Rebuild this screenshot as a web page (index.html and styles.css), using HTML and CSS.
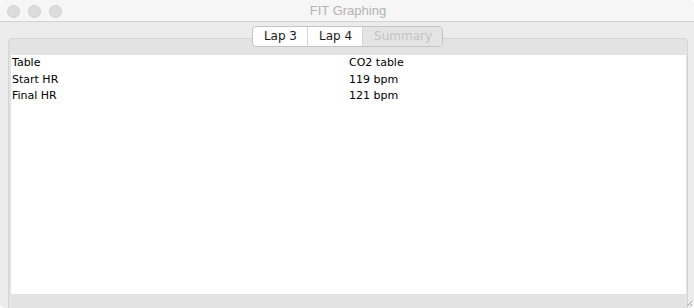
FILE: index.html
```html
<!DOCTYPE html>
<html>
<head>
<meta charset="utf-8">
<title>FIT Graphing</title>
<link rel="stylesheet" href="styles.css">
</head>
<body>
<div class="window">
  <div class="titlebar">
    <div class="lights">
      <span class="light"></span>
      <span class="light"></span>
      <span class="light"></span>
    </div>
    <div class="title">FIT Graphing</div>
  </div>
  <div class="content">
    <div class="tabs">
      <div class="tab">Lap 3</div>
      <div class="tab">Lap 4</div>
      <div class="tab selected">Summary</div>
    </div>
    <div class="panel">
      <div class="table">
        <div class="cell">Table</div><div class="cell">CO2 table</div>
        <div class="cell">Start HR</div><div class="cell">119 bpm</div>
        <div class="cell">Final HR</div><div class="cell">121 bpm</div>
      </div>
    </div>
  </div>
  <svg class="grip" width="6" height="6" viewBox="0 0 6 6"><path d="M1 6 L6 1 M4 6 L6 4" stroke="#a8a8a8" stroke-width="1"/></svg>
</div>
</body>
</html>
```
FILE: styles.css
```css
html, body {
  margin: 0;
  padding: 0;
  background: #ffffff;
}
.window {
  position: relative;
  width: 694px;
  height: 308px;
  background: #ececec;
  border-radius: 5px;
  overflow: hidden;
  display: flex;
  flex-direction: column;
}
.titlebar {
  position: relative;
  height: 21px;
  background: #f6f6f6;
  border-bottom: 1px solid #d3d3d3;
  display: flex;
  align-items: center;
  justify-content: center;
}
.lights {
  position: absolute;
  left: 7px;
  top: 5px;
  display: flex;
  gap: 8px;
}
.light {
  width: 11px;
  height: 11px;
  border-radius: 50%;
  background: #dcdcdc;
  border: 0.5px solid #cfcfcf;
}
.title {
  font-family: "Liberation Sans", Arial, sans-serif;
  font-size: 13px;
  color: #b3b3b3;
  line-height: 21px;
  padding-left: 2px;
}
.content {
  flex: 1;
  display: flex;
  flex-direction: column;
  padding-top: 4px;
}
.tabs {
  position: relative;
  z-index: 1;
  align-self: center;
  margin-left: 1px;
  display: flex;
  height: 19px;
  border: 1px solid #c4c4c4;
  border-radius: 4px;
  background: #ffffff;
  margin-bottom: -9px;
  overflow: hidden;
}
.tab {
  font-family: "DejaVu Sans", "Lucida Grande", sans-serif;
  font-size: 12px;
  line-height: 19px;
  color: #1a1a1a;
  padding: 0 10px 0 11px;
}
.tab + .tab {
  border-left: 1px solid #d6d6d6;
}
.tab.selected {
  background: #e4e4e4;
  color: #c3c3c3;
  padding: 0 10px 0 11px;
}
.panel {
  margin: 0 6px 0 8px;
  height: 256px;
  border: 1px solid #d4d4d4;
  border-radius: 4px;
  background: #e3e3e3;
  padding: 16px 1px 1px 2px;
}
.table {
  background: #ffffff;
  height: 239px;
  display: grid;
  grid-template-columns: 337px 337px;
  grid-auto-rows: 16.5px;
  align-content: start;
}
.cell {
  font-family: "DejaVu Sans", "Lucida Grande", sans-serif;
  font-size: 11px;
  line-height: 16.5px;
  color: #000000;
  padding-left: 1px;
  white-space: nowrap;
}
.grip {
  position: absolute;
  right: 2px;
  bottom: 2px;
}
```
